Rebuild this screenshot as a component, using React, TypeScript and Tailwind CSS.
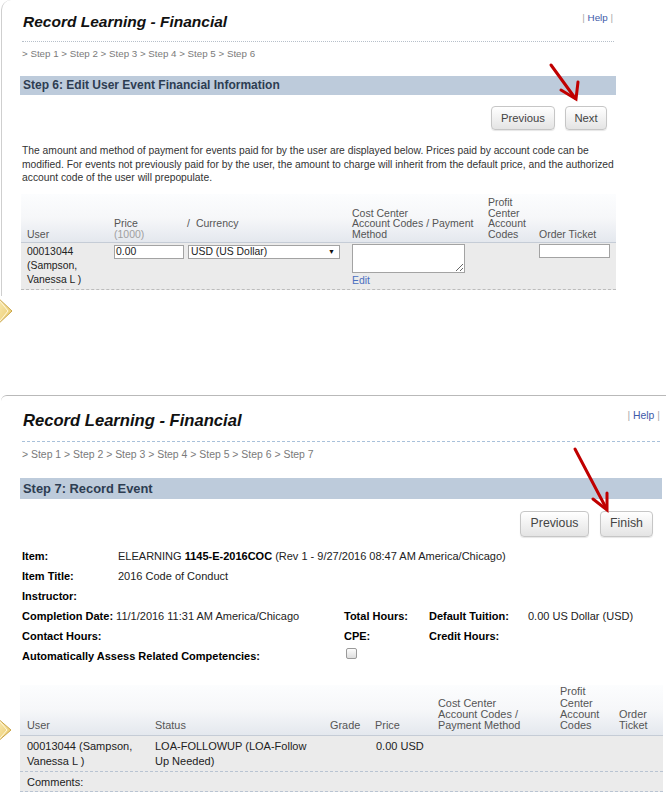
import React from "react";

function Btn({ w, h, fs, children }: { w: string; h: string; fs: string; children: React.ReactNode }) {
  return (
    <div
      className={`${w} ${h} ${fs} flex items-center justify-center rounded-[4px] border border-[#c6c6c6] bg-linear-to-b from-[#ffffff] to-[#e4e4e4] text-[#444] shadow-[0_1px_1px_rgba(0,0,0,0.10)]`}
    >
      {children}
    </div>
  );
}

export default function App() {
  return (
    <div className="relative w-[666px] h-[795px] overflow-hidden bg-white font-['Liberation_Sans',Arial,sans-serif] text-[#222]">
      {/* ===== Top panel ===== */}
      <div className="h-[395px]">
        <div className="ml-[1px] h-[296px] rounded-tl-[10px] border-l border-[#cfcfcf]">
          <div className="ml-[18px] w-[596px] pt-[12px]">
            <div className="flex items-start justify-between">
              <div className="mt-[1px] pl-[3px] text-[15.5px] font-bold italic leading-[18px] text-[#111]">
                Record Learning - Financial
              </div>
              <div className="pr-[3px] text-[9.8px] leading-[12px] text-[#aaa]">
                | <span className="text-[#3d5aa8]">Help</span> |
              </div>
            </div>
            <div className="mt-[10px] ml-[2px] mr-[2px] border-t border-dotted border-[#b7c0ca]" />
            <div className="mt-[6px] pl-[2px] text-[9.75px] leading-[12px] text-[#7a7a7a]">
              &gt; Step 1 &gt; Step 2 &gt; Step 3 &gt; Step 4 &gt; Step 5 &gt; Step 6
            </div>
            <div className="mt-[16px] h-[19px] bg-[#bdcbdb] pl-[3px] text-[12px] font-bold leading-[19px] text-[#2d3d52]">
              Step 6: Edit User Event Financial Information
            </div>
            <div className="mt-[11px] flex justify-end gap-[10px] pr-[9px]">
              <Btn w="w-[64px]" h="h-[24px]" fs="text-[11.3px]">Previous</Btn>
              <Btn w="w-[42px]" h="h-[24px]" fs="text-[11.3px]">Next</Btn>
            </div>
            <div className="mt-[14px] pl-[2px] text-[10.3px] leading-[13.7px] text-[#333]">
              <div className="whitespace-nowrap">
                The amount and method of payment for events paid for by the user are displayed below. Prices paid by account code can be
              </div>
              <div className="whitespace-nowrap">
                modified. For events not previously paid for by the user, the amount to charge will inherit from the default price, and the authorized
              </div>
              <div className="whitespace-nowrap">account code of the user will prepopulate.</div>
            </div>
            {/* table */}
            <div className="mt-[9px] ml-[1px] w-[595px]">
              <div className="grid h-[49px] grid-cols-[90px_74px_164px_136px_51px_80px] border-b border-[#c5ccd6] bg-linear-to-b from-[#fcfdfe] via-[#f6f7f9] to-[#e4e8ee] text-[10.5px] leading-[10.5px] text-[#555]">
                <div className="flex flex-col justify-end pb-[3px] pl-[6px]">User</div>
                <div className="flex flex-col justify-end pb-[3px] pl-[3px]">
                  <div>Price</div>
                  <div className="text-[#a0a0a0]">(1000)</div>
                </div>
                <div className="flex flex-col justify-end pb-[13.5px] pl-[2px]">
                  <div>
                    /<span className="ml-[6px]">Currency</span>
                  </div>
                </div>
                <div className="flex flex-col justify-end pb-[3px] pl-[3px]">
                  <div>Cost Center</div>
                  <div className="whitespace-nowrap">Account Codes / Payment</div>
                  <div>Method</div>
                </div>
                <div className="flex flex-col justify-end pb-[3px] pl-[3px]">
                  <div>Profit</div>
                  <div>Center</div>
                  <div>Account</div>
                  <div>Codes</div>
                </div>
                <div className="flex flex-col justify-end pb-[3px] pl-[3px] whitespace-nowrap">Order Ticket</div>
              </div>
              <div className="grid h-[47px] grid-cols-[90px_74px_164px_136px_51px_80px] border-b border-dashed border-[#bcbcbc] bg-[#ebebeb] text-[10.4px] leading-[14px] text-[#222]">
                <div className="pl-[6px] pt-[2px]">
                  <div>00013044</div>
                  <div>(Sampson,</div>
                  <div>Vanessa L )</div>
                </div>
                <div className="pl-[3px] pt-[2px]">
                  <div className="h-[14px] w-[70px] border border-[#a3a3a3] bg-white pl-[1px] text-[10.4px] leading-[12px]">
                    0.00
                  </div>
                </div>
                <div className="pl-[3px] pt-[2px]">
                  <div className="flex h-[14px] w-[152px] items-center justify-between border border-[#a3a3a3] bg-white pl-[2px] pr-[4px] text-[10.4px] leading-[12px]">
                    <span>USD (US Dollar)</span>
                    <span className="text-[7px] text-[#111]">▼</span>
                  </div>
                </div>
                <div className="pl-[3px] pt-[1px]">
                  <textarea
                    className="block h-[29px] w-[113px] border border-[#a3a3a3] bg-white"
                    defaultValue=""
                  />
                  <div className="mt-[1px] text-[10.4px] leading-[14px] text-[#4a6fc0]">Edit</div>
                </div>
                <div />
                <div className="pl-[3px] pt-[1px]">
                  <div className="h-[14px] w-[71px] border border-[#a3a3a3] bg-white" />
                </div>
              </div>
            </div>
          </div>
        </div>
      </div>

      {/* ===== Bottom panel ===== */}
      <div className="ml-[1px] rounded-tl-[6px] border-t border-[#b9b9b9]">
        <div className="ml-[19px] w-[643px]">
          <div className="mt-[15px] flex items-start justify-between">
            <div className="pl-[3px] text-[16.6px] font-bold italic leading-[19.5px] text-[#111]">
              Record Learning - Financial
            </div>
            <div className="-mt-[2px] pr-[3px] text-[10.4px] leading-[13px] text-[#aaa]">
              | <span className="text-[#3d5aa8]">Help</span> |
            </div>
          </div>
          <div className="mt-[10px] ml-[2px] mr-[3px] border-t border-dashed border-[#a9c1da]" />
          <div className="mt-[6px] pl-[2px] text-[10.45px] leading-[13px] text-[#7a7a7a]">
            &gt; Step 1 &gt; Step 2 &gt; Step 3 &gt; Step 4 &gt; Step 5 &gt; Step 6 &gt; Step 7
          </div>
          <div className="mt-[17px] mr-[1px] h-[21px] bg-[#bdcbdb] pl-[3px] text-[12.9px] font-bold leading-[21px] text-[#2d3d52]">
            Step 7: Record Event
          </div>
          <div className="mt-[12px] flex justify-end gap-[11px] pr-[10px]">
            <Btn w="w-[69px]" h="h-[26px]" fs="text-[12.3px]">Previous</Btn>
            <Btn w="w-[53px]" h="h-[26px]" fs="text-[12.3px]">Finish</Btn>
          </div>

          {/* info */}
          <div className="mt-[9px] pl-[2px] text-[11px] leading-[20px] text-[#222]">
            <div className="flex">
              <div className="w-[96px] font-bold text-black">Item:</div>
              <div>
                ELEARNING <span className="font-bold text-black">1145-E-2016COC</span> (Rev 1 - 9/27/2016 08:47 AM America/Chicago)
              </div>
            </div>
            <div className="flex">
              <div className="w-[96px] font-bold text-black">Item Title:</div>
              <div>2016 Code of Conduct</div>
            </div>
            <div className="flex">
              <div className="w-[96px] font-bold text-black">Instructor:</div>
            </div>
            <div className="grid grid-cols-[322px_85px_99px_1fr]">
              <div className="whitespace-nowrap">
                <span className="font-bold text-black">Completion Date:</span> 11/1/2016 11:31 AM America/Chicago
              </div>
              <div className="font-bold text-black">Total Hours:</div>
              <div className="font-bold text-black">Default Tuition:</div>
              <div>0.00 US Dollar (USD)</div>
            </div>
            <div className="grid grid-cols-[322px_85px_99px_1fr]">
              <div className="font-bold text-black">Contact Hours:</div>
              <div className="font-bold text-black">CPE:</div>
              <div className="font-bold text-black">Credit Hours:</div>
              <div />
            </div>
            <div className="grid grid-cols-[322px_85px_99px_1fr]">
              <div className="whitespace-nowrap font-bold text-black">Automatically Assess Related Competencies:</div>
              <div className="flex items-start">
                <div className="ml-[2px] mt-[2px] h-[11px] w-[11px] rounded-[2px] border border-[#9a9a9a] bg-linear-to-b from-[#fdfdfd] to-[#dedede]" />
              </div>
              <div />
              <div />
            </div>
          </div>

          {/* table */}
          <div className="mt-[19px] w-[643px]">
            <div className="grid h-[51px] grid-cols-[132px_175px_45px_63px_122px_59px_47px] border-b border-[#c5ccd6] bg-linear-to-b from-[#fcfdfe] via-[#f6f7f9] to-[#e4e8ee] text-[10.9px] leading-[11.3px] text-[#555]">
              <div className="flex flex-col justify-end pb-[3px] pl-[7px]">User</div>
              <div className="flex flex-col justify-end pb-[3px] pl-[3px]">Status</div>
              <div className="flex flex-col justify-end pb-[3px] pl-[3px]">Grade</div>
              <div className="flex flex-col justify-end pb-[3px] pl-[3px]">Price</div>
              <div className="flex flex-col justify-end pb-[3px] pl-[3px]">
                <div>Cost Center</div>
                <div>Account Codes /</div>
                <div className="whitespace-nowrap">Payment Method</div>
              </div>
              <div className="flex flex-col justify-end pb-[3px] pl-[3px]">
                <div>Profit</div>
                <div>Center</div>
                <div>Account</div>
                <div>Codes</div>
              </div>
              <div className="flex flex-col justify-end pb-[3px] pl-[3px]">
                <div>Order</div>
                <div>Ticket</div>
              </div>
            </div>
            <div className="grid h-[36px] grid-cols-[132px_175px_45px_63px_122px_59px_47px] border-b border-dashed border-[#b9c4d2] bg-[#ebebeb] text-[11px] leading-[15px] text-[#222]">
              <div className="pl-[7px] pt-[3px]">
                <div className="whitespace-nowrap">00013044 (Sampson,</div>
                <div>Vanessa L )</div>
              </div>
              <div className="pl-[3px] pt-[3px]">
                <div className="whitespace-nowrap">LOA-FOLLOWUP (LOA-Follow</div>
                <div>Up Needed)</div>
              </div>
              <div />
              <div className="pl-[4px] pt-[3px] whitespace-nowrap">0.00 USD</div>
              <div />
              <div />
              <div />
            </div>
            <div className="h-[20px] border-b border-dashed border-[#b9c4d2] bg-[#ebebeb] pl-[7px] pt-[4px] text-[11px] leading-[13px] text-[#222]">
              Comments:
            </div>
          </div>
        </div>
      </div>

      {/* ===== Overlays: arrows and chevrons ===== */}
      <svg
        className="pointer-events-none absolute left-0 top-0"
        width="666"
        height="795"
        viewBox="0 0 666 795"
      >
        <defs>
          <linearGradient id="chev" x1="0" y1="0" x2="1" y2="1">
            <stop offset="0" stopColor="#fbeebb" />
            <stop offset="1" stopColor="#e9c765" />
          </linearGradient>
        </defs>
        <g stroke="#c00000" strokeWidth="3" fill="none" strokeLinecap="round" strokeLinejoin="miter">
          <line x1="551" y1="65" x2="575" y2="98" />
          <polyline points="561,90 576,99 578,82" />
          <line x1="575" y1="449" x2="605" y2="506" />
          <polyline points="593,499 607,510 607,493" />
        </g>
        <polygon points="-4,296 12,311 -4,326" fill="url(#chev)" stroke="#c9a54a" strokeWidth="1" />
        <polygon points="-4,296 8,311 -4,326" fill="none" stroke="#fff7dc" strokeWidth="1" />
        <polygon points="-4,717 11,730 -4,743" fill="url(#chev)" stroke="#c9a54a" strokeWidth="1" />
        <polygon points="-4,717 7,730 -4,743" fill="none" stroke="#fff7dc" strokeWidth="1" />
      </svg>
    </div>
  );
}
